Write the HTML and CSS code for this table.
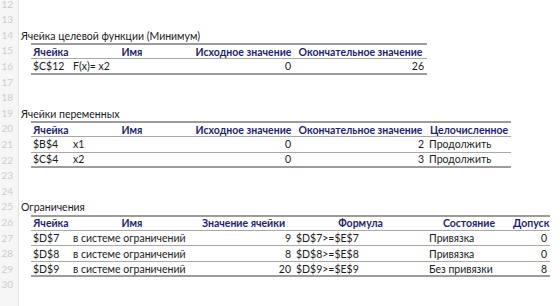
FILE: index.html
```html
<!DOCTYPE html>
<html lang="ru">
<head>
<meta charset="utf-8">
<title>Отчёт о результатах</title>
<link rel="stylesheet" href="styles.css">
</head>
<body>
<div class="page">
  <div class="gutter">
    <div class="rn">12</div><div class="rn">13</div><div class="rn">14</div><div class="rn">15</div>
    <div class="rn">16</div><div class="rn">17</div><div class="rn">18</div><div class="rn">19</div>
    <div class="rn">20</div><div class="rn">21</div><div class="rn">22</div><div class="rn">23</div>
    <div class="rn">24</div><div class="rn">25</div><div class="rn">26</div><div class="rn">27</div>
    <div class="rn">28</div><div class="rn">29</div><div class="rn">30</div><div class="rn"></div>
  </div>
  <div class="sheet">
    <div class="blank"></div>
    <div class="blank"></div>
    <div class="title">Ячейка целевой функции (Минимум)</div>
    <div class="tbl">
      <div class="row head first">
        <div class="c b ctr">Ячейка</div><div class="c cc ctr">Имя</div><div class="c d ctr">Исходное значение</div><div class="c e ctr">Окончательное значение</div>
      </div>
      <div class="row last">
        <div class="c b">$C$12</div><div class="c cc">F(x)= x2</div><div class="c d num">0</div><div class="c e num">26</div>
      </div>
    </div>
    <div class="blank"></div>
    <div class="blank"></div>
    <div class="title">Ячейки переменных</div>
    <div class="tbl">
      <div class="row head first">
        <div class="c b ctr">Ячейка</div><div class="c cc ctr">Имя</div><div class="c d ctr">Исходное значение</div><div class="c e ctr">Окончательное значение</div><div class="c f ctr">Целочисленное</div>
      </div>
      <div class="row">
        <div class="c b">$B$4</div><div class="c cc">x1</div><div class="c d num">0</div><div class="c e num">2</div><div class="c f">Продолжить</div>
      </div>
      <div class="row last">
        <div class="c b">$C$4</div><div class="c cc">x2</div><div class="c d num">0</div><div class="c e num">3</div><div class="c f">Продолжить</div>
      </div>
    </div>
    <div class="blank"></div>
    <div class="blank"></div>
    <div class="title">Ограничения</div>
    <div class="tbl">
      <div class="row head first">
        <div class="c b ctr">Ячейка</div><div class="c cc ctr">Имя</div><div class="c d ctr">Значение ячейки</div><div class="c e ctr">Формула</div><div class="c f ctr">Состояние</div><div class="c g ctr">Допуск</div>
      </div>
      <div class="row">
        <div class="c b">$D$7</div><div class="c cc">в системе ограничений</div><div class="c d num">9</div><div class="c e">$D$7&gt;=$E$7</div><div class="c f">Привязка</div><div class="c g num">0</div>
      </div>
      <div class="row">
        <div class="c b">$D$8</div><div class="c cc">в системе ограничений</div><div class="c d num">8</div><div class="c e">$D$8&gt;=$E$8</div><div class="c f">Привязка</div><div class="c g num">0</div>
      </div>
      <div class="row last">
        <div class="c b">$D$9</div><div class="c cc">в системе ограничений</div><div class="c d num">20</div><div class="c e">$D$9&gt;=$E$9</div><div class="c f">Без привязки</div><div class="c g num">8</div>
      </div>
    </div>
    <div class="blank"></div>
  </div>
</div>
</body>
</html>
```
FILE: styles.css
```css
html, body {
  margin: 0;
  padding: 0;
  background: #ffffff;
}
body {
  width: 560px;
  height: 306px;
  overflow: hidden;
  font-family: Lato, "Open Sans", "Noto Sans", sans-serif;
  font-size: 10.5px;
  color: #1a1a1a;
}
.page {
  display: flex;
  margin-top: -3.3px;
}
.gutter {
  width: 18px;
  flex: none;
  background: #f6f6f6;
  border-right: 1px solid #e6e6e6;
  display: flex;
  flex-direction: column;
}
.rn {
  height: 15.6px;
  line-height: 15.6px;
  text-align: right;
  padding-right: 5px;
  font-size: 10px;
  color: #cdcdcd;
  overflow: hidden;
}
.sheet {
  flex: 1;
  display: flex;
  flex-direction: column;
  padding-left: 2px;
}
.blank {
  height: 15.6px;
}
.title {
  height: 15.6px;
  line-height: 15.6px;
  white-space: nowrap;
  padding-top: 1px;
  box-sizing: border-box;
}
.tbl {
  margin-left: 10px;
  display: flex;
  flex-direction: column;
  align-items: flex-start;
}
.row {
  display: flex;
  height: 15.6px;
  box-sizing: border-box;
  border-bottom: 1px solid #a8a8a8;
  align-items: center;
}
.row.first {
  border-top: 2px solid #9c9c9c;
}
.row.last {
  border-bottom: 2px solid #9c9c9c;
}
.head {
  font-weight: bold;
  color: #1f1f6e;
}
.c {
  box-sizing: border-box;
  padding: 0 2px;
  white-space: nowrap;
  overflow: visible;
}
.b { width: 40px; }
.cc { width: 122px; }
.d { width: 101px; }
.e { width: 133px; }
.f { width: 84px; }
.g { width: 39px; }
.ctr { text-align: center; }
.num { text-align: right; padding-right: 3px; }
```
